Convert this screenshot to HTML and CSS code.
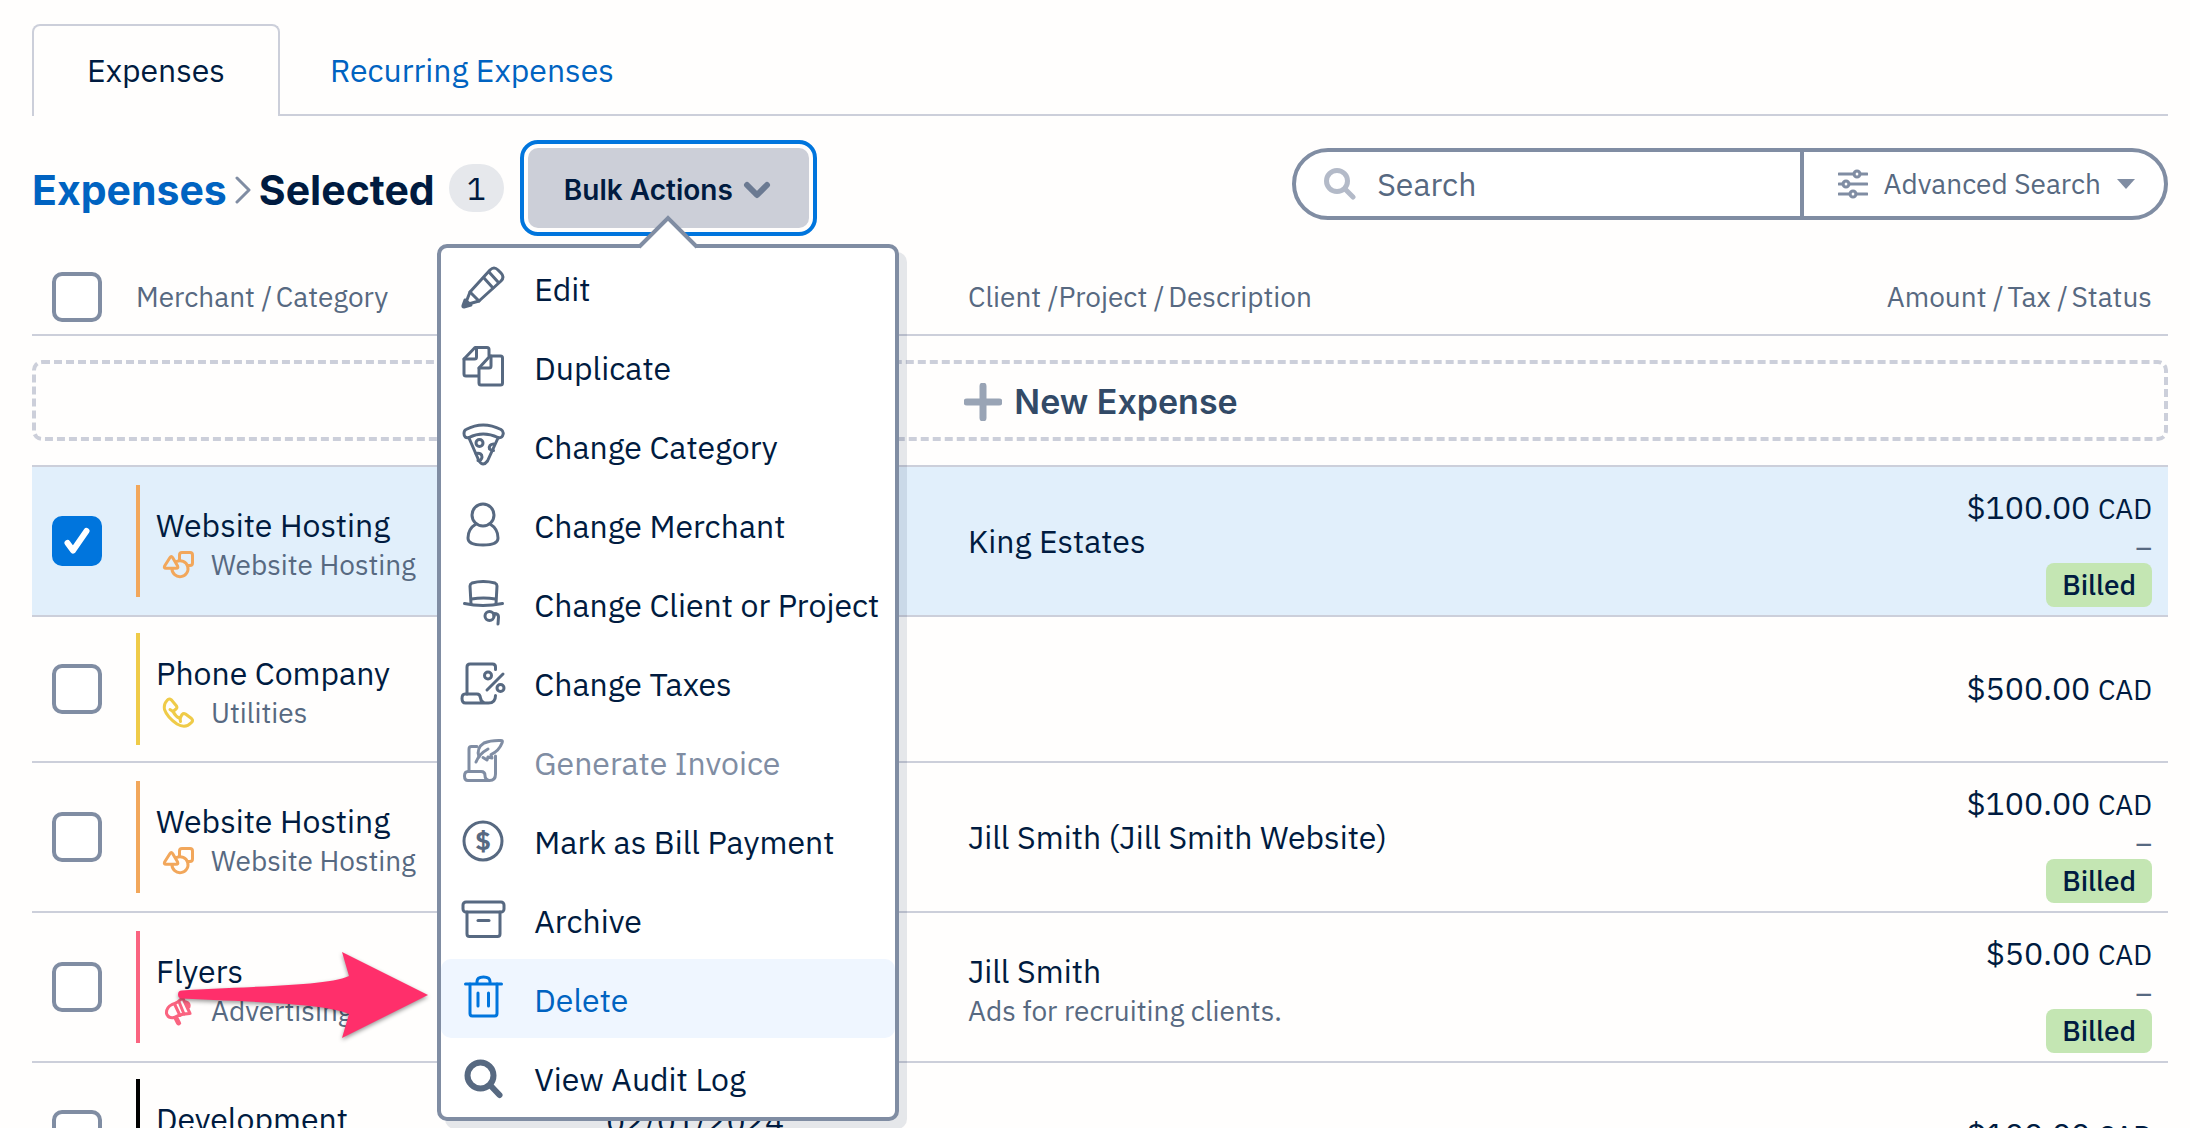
FILE: index.html
```html
<!DOCTYPE html>
<html lang="en">
<head>
    <meta charset="UTF-8">
    <meta name="viewport" content="width=device-width, initial-scale=1.0">
    <title>Expenses</title>
    <link rel="stylesheet" href="styles.css">
</head>
<body>
    <!-- Shared icons -->
    <svg class="sprite" aria-hidden="true">
        <symbol id="icon-shapes" viewBox="0 0 32 32">
            <path d="M8 8.5q1.300-2 2.600 0l5 8.500q1 2.300-1.400 2.300H4q-2.400 0-1.400-2.300z"/>
            <path d="M17.500 11V6q0-2.500 2.500-2.500h8q2.500 0 2.500 2.500v8q0 2.500-2.500 2.500h-2.500"/>
            <path d="M14.500 12.500a8 8 0 1 1-4.500 7"/>
        </symbol>
        <symbol id="icon-phone" viewBox="0 0 32 32">
            <path d="M5 3.500Q7 1 9.500 3l5 6q1 2-.5 3l-3 2.500q2.500 5 7 7l2-4q1.500-1.500 3.500-.5l6 4.500q2 2 0 4-6 6.500-14.500 1.500Q5 20 2.500 12.500 1.500 7 5 3.500z"/>
            <path d="M8 12.500l3 2M18 21.500l.5 3"/>
        </symbol>
        <symbol id="icon-megaphone" viewBox="0 0 32 32">
            <path d="M10 9.500q6-1.500 10.500-7L28 18.500q-8 0-16 4-6 1-7.500-4-.5-6 5.500-9z"/>
            <path d="M13 10l5 10.500M17.500 8l4.500 11"/>
            <path d="M24 7q4 1 3 5z" fill="currentColor"/>
            <path d="M14.500 24l2 4" stroke-width="5"/>
        </symbol>
    </svg>

    <main class="page">
        <nav class="tabs">
            <a href="#expenses" class="tab active">Expenses</a>
            <a href="#recurring" class="tab">Recurring Expenses</a>
        </nav>

        <header class="toolbar">
            <h1 class="breadcrumb">
                <a href="#expenses">Expenses</a>
                <svg class="crumb-arrow" viewBox="0 0 16 28"><path d="M2 2l12 12L2 26"/></svg>
                <span>Selected</span>
            </h1>
            <span class="count">1</span>

            <div class="bulk">
                <button type="button" class="bulk-button" aria-haspopup="true" aria-expanded="true">
                    Bulk Actions
                    <svg class="bulk-chevron" viewBox="0 0 28 18"><path d="M4 4l10 10L24 4"/></svg>
                </button>
                <div class="menu" role="menu">
                    <svg class="menu-pointer" viewBox="0 0 64 34">
                        <path class="fill" d="M3 34L32 4l29 30z"/>
                        <path class="line" d="M3 32L32 3l29 29"/>
                    </svg>
                    <button type="button" role="menuitem" class="menu-item">
                        <svg class="icon" viewBox="0 0 48 48">
                            <path d="M6 41l5-13L31 6q4-4 8 0l3 3q4 4 0 8L20 37z"/>
                            <path d="M11 28l9 9M25 14l9 10M30 8l9 10"/>
                            <path class="solid" d="M6 36l6 5-7 2q-1.500 0-1-1.500z"/>
                        </svg>
                        <span>Edit</span>
                    </button>
                    <button type="button" role="menuitem" class="menu-item">
                        <svg class="icon" viewBox="0 0 48 48">
                            <path d="M19 33H7q-2 0-2-2V16L16 4.500h12q2 0 2 2v6"/>
                            <path d="M17.500 4.500V14q0 2-2 2H5"/>
                            <path d="M20 25l11-12h10.500q2 0 2 2v25q0 2-2 2H22q-2 0-2-2z"/>
                            <path d="M32 13v10q0 2-2 2H20"/>
                        </svg>
                        <span>Duplicate</span>
                    </button>
                    <button type="button" role="menuitem" class="menu-item">
                        <svg class="icon" viewBox="0 0 48 48">
                            <path d="M7 7.500q17-9 35 0 3 2 2 5-1 4-5 3-15-7-29 0-5 1-5-4 0-3 2-4z"/>
                            <path d="M10 16l10 23q4 6 8.500 0L39 16"/>
                            <circle cx="20.500" cy="21" r="3.500"/>
                            <path d="M34.500 22q-5 .5-4 5 1.500 1.500 4 1.500M17 31.500q6-1 6 3.500-.5 4-4 3.500"/>
                        </svg>
                        <span>Change Category</span>
                    </button>
                    <button type="button" role="menuitem" class="menu-item">
                        <svg class="icon" viewBox="0 0 48 48">
                            <circle cx="24" cy="14" r="11"/>
                            <path d="M17 23c-5 3-8 8-8 14q0 7 15 7t15-7c0-6-3-11-8-14"/>
                        </svg>
                        <span>Change Merchant</span>
                    </button>
                    <button type="button" role="menuitem" class="menu-item">
                        <svg class="icon" viewBox="0 0 48 48">
                            <path d="M12 24L11 6q0-2 2-3 11-3 23 0 2 1 2 3l-1 18"/>
                            <path d="M5.500 23.500q18 4 38 0M12.500 19q12-2 24 0"/>
                            <circle cx="30.500" cy="36" r="4.500"/>
                            <path d="M35 36v-2.500q4.500 0 4.500 3.500l-.5 7"/>
                        </svg>
                        <span>Change Client or Project</span>
                    </button>
                    <button type="button" role="menuitem" class="menu-item">
                        <svg class="icon" viewBox="0 0 48 48">
                            <path d="M36.500 10.500V8q0-3-3-3H11q-3 0-3 3v27"/>
                            <path d="M36.500 36.500q0 7.500-7 7.500H6.500Q3 44 3 39.500T6 35h12q3 0 3.500 4t4 5"/>
                            <circle cx="29" cy="16.500" r="3.500"/>
                            <circle cx="41.500" cy="29" r="3.500"/>
                            <path d="M44 15L28 31"/>
                        </svg>
                        <span>Change Taxes</span>
                    </button>
                    <button type="button" role="menuitem" class="menu-item" disabled>
                        <svg class="icon" viewBox="0 0 48 48">
                            <path d="M18 8.500h-5.500q-2.500 0-2.500 2.500v22"/>
                            <path d="M36.500 18v18q0 6.500-6 6.500H9Q5.500 42.500 5.500 38T9 33.500h13q4 0 4 4t4 5"/>
                            <path d="M20 19q-3-9 5-14 7-3 17.500-2.500 1.500 0 .5 2.500-3 8-11 11.500l1 3.500-4-1-1 3-4-2.500"/>
                            <path d="M17 24q3-8 12-13"/>
                        </svg>
                        <span>Generate Invoice</span>
                    </button>
                    <button type="button" role="menuitem" class="menu-item">
                        <svg class="icon" viewBox="0 0 48 48">
                            <circle cx="24" cy="24" r="19"/>
                            <text class="dollar" x="24" y="33">$</text>
                        </svg>
                        <span>Mark as Bill Payment</span>
                    </button>
                    <button type="button" role="menuitem" class="menu-item">
                        <svg class="icon" viewBox="0 0 48 48">
                            <rect x="4" y="6" width="41" height="10" rx="3"/>
                            <path d="M8 16v22q0 2.500 2.500 2.500h28Q41 40.500 41 38V16"/>
                            <path d="M19 24.500h11"/>
                        </svg>
                        <span>Archive</span>
                    </button>
                    <button type="button" role="menuitem" class="menu-item selected">
                        <svg class="icon" viewBox="0 0 48 48">
                            <path d="M6.500 9h36M18 9V6.500q0-4.500 6.500-4.500T31 6.500V9"/>
                            <path d="M11 9v29.500q0 2.500 2.500 2.500h22q2.500 0 2.500-2.500V9"/>
                            <path d="M19 18v13M29.500 18v13"/>
                        </svg>
                        <span>Delete</span>
                    </button>
                    <button type="button" role="menuitem" class="menu-item">
                        <svg class="icon thick" viewBox="0 0 48 48">
                            <circle cx="21.500" cy="21.500" r="13"/>
                            <path d="M31 31l9.500 10"/>
                        </svg>
                        <span>View Audit Log</span>
                    </button>
                </div>
            </div>

            <form class="search">
                <label class="search-field">
                    <svg class="search-icon" viewBox="0 0 32 32"><circle cx="13" cy="13" r="10.500"/><path d="M21 21l8 8"/></svg>
                    <input type="text" placeholder="Search" aria-label="Search">
                </label>
                <button type="button" class="advanced">
                    <svg class="sliders" viewBox="0 0 30 30">
                        <path d="M1 5h15M22 5h7M1 15h4M11 15h18M1 25h11M18 25h11"/>
                        <circle cx="19" cy="5" r="3"/><circle cx="8" cy="15" r="3"/><circle cx="15" cy="25" r="3"/>
                    </svg>
                    Advanced Search
                    <svg class="caret" viewBox="0 0 18 10"><path d="M0 0h18L9 10z"/></svg>
                </button>
            </form>
        </header>

        <table class="expenses">
            <colgroup>
                <col class="col-check">
                <col class="col-merchant">
                <col class="col-date">
                <col>
                <col class="col-amount">
            </colgroup>
            <thead>
                <tr>
                    <th><input type="checkbox" aria-label="Select all"></th>
                    <th>Merchant <span class="slash">/</span> Category</th>
                    <th></th>
                    <th>Client /Project <span class="slash">/</span> Description</th>
                    <th class="right">Amount <span class="slash">/</span> Tax <span class="slash">/</span> Status</th>
                </tr>
            </thead>
            <tbody>
                <tr class="new-row">
                    <td colspan="5">
                        <button type="button" class="new-expense">
                            <svg class="plus" viewBox="0 0 38 38"><path d="M19 3v32M3 19h32"/></svg>
                            New Expense
                        </button>
                    </td>
                </tr>
                <tr class="checked tall">
                    <td><input type="checkbox" aria-label="Website Hosting" checked></td>
                    <td>
                        <div class="merchant orange">
                            <div class="name">Website Hosting</div>
                            <div class="category"><svg><use href="#icon-shapes"/></svg>Website Hosting</div>
                        </div>
                    </td>
                    <td></td>
                    <td>King Estates</td>
                    <td class="right">
                        <div class="amount">$100.00 <small>CAD</small></div>
                        <div class="tax">–</div>
                        <span class="status">Billed</span>
                    </td>
                </tr>
                <tr>
                    <td><input type="checkbox" aria-label="Phone Company"></td>
                    <td>
                        <div class="merchant yellow">
                            <div class="name">Phone Company</div>
                            <div class="category"><svg><use href="#icon-phone"/></svg>Utilities</div>
                        </div>
                    </td>
                    <td></td>
                    <td></td>
                    <td class="right">
                        <div class="amount">$500.00 <small>CAD</small></div>
                    </td>
                </tr>
                <tr class="tall">
                    <td><input type="checkbox" aria-label="Website Hosting"></td>
                    <td>
                        <div class="merchant orange">
                            <div class="name">Website Hosting</div>
                            <div class="category"><svg><use href="#icon-shapes"/></svg>Website Hosting</div>
                        </div>
                    </td>
                    <td></td>
                    <td>Jill Smith (Jill Smith Website)</td>
                    <td class="right">
                        <div class="amount">$100.00 <small>CAD</small></div>
                        <div class="tax">–</div>
                        <span class="status">Billed</span>
                    </td>
                </tr>
                <tr class="tall">
                    <td><input type="checkbox" aria-label="Flyers"></td>
                    <td>
                        <div class="merchant pink">
                            <div class="name">Flyers</div>
                            <div class="category"><svg><use href="#icon-megaphone"/></svg>Advertising</div>
                            <svg class="callout" viewBox="0 0 256 96">
                                <path d="M5 43.500C80 39 150 39 172 29l-7-24 86 43-86 43 7-24C150 57 80 55 5 51.500a4 4 0 0 1 0-8z"/>
                            </svg>
                        </div>
                    </td>
                    <td></td>
                    <td>
                        <div class="client">
                            <div>Jill Smith</div>
                            <div class="description">Ads for recruiting clients.</div>
                        </div>
                    </td>
                    <td class="right">
                        <div class="amount">$50.00 <small>CAD</small></div>
                        <div class="tax">–</div>
                        <span class="status">Billed</span>
                    </td>
                </tr>
                <tr>
                    <td><input type="checkbox" aria-label="Development"></td>
                    <td>
                        <div class="merchant black">
                            <div class="name">Development</div>
                        </div>
                    </td>
                    <td><div class="date">02/01/2024</div></td>
                    <td></td>
                    <td class="right">
                        <div class="amount">$100.00 <small>CAD</small></div>
                    </td>
                </tr>
            </tbody>
        </table>
    </main>
</body>
</html>
```
FILE: styles.css
```css
* {
    box-sizing: border-box;
}
body {
    margin: 0;
    height: 100vh;
    overflow: hidden;
    background-color: #fffefd;
    color: #001b40;
    font-family: "IBM Plex Sans", Roboto, sans-serif;
    font-size: 32px;
    line-height: 40px;
}
button,
input {
    font: inherit;
    color: inherit;
}
button {
    cursor: pointer;
}
svg {
    flex: none;
    fill: none;
    stroke: currentColor;
    stroke-linecap: round;
    stroke-linejoin: round;
}
.sprite {
    position: absolute;
    width: 0;
    height: 0;
}
.page {
    padding: 24px 22px 0 32px;
}

/* Tabs */
.tabs {
    display: flex;
    border-bottom: 2px solid #cccfda;
}
.tab {
    display: flex;
    align-items: center;
    height: 92px;
    margin-bottom: -2px;
    padding: 0 50px;
    color: #0063c1;
    text-decoration: none;
}
.tab.active {
    padding: 0 53px 2px;
    border: 2px solid #cccfda;
    border-bottom: 0;
    border-radius: 8px 8px 0 0;
    background-color: #fffefd;
    color: #001b40;
}

/* Toolbar */
.toolbar {
    display: flex;
    align-items: flex-start;
    padding: 32px 0 28px;
}
.breadcrumb {
    display: flex;
    align-items: center;
    height: 80px;
    margin: 0;
    padding-top: 4px;
    font-family: Inter, sans-serif;
    font-size: 41px;
    font-weight: 700;
}
.breadcrumb a {
    color: #0063c1;
    text-decoration: none;
}
.crumb-arrow {
    width: 16px;
    height: 28px;
    margin: 0 8px;
    color: #808da3;
    stroke-width: 3;
}
.count {
    margin: 16px 24px 0 14px;
    padding: 4px 18px;
    border-radius: 24px;
    background-color: #e6e8ec;
}
.bulk {
    position: relative;
}
.bulk-button {
    display: flex;
    align-items: center;
    gap: 10px;
    height: 80px;
    padding: 4px 38px 0 36px;
    border: 0;
    border-radius: 10px;
    outline: 4px solid #0075dd;
    outline-offset: 4px;
    background-color: #cccfd8;
    font-family: Inter, sans-serif;
    font-size: 28px;
    font-weight: 600;
}
.bulk-chevron {
    width: 28px;
    height: 18px;
    color: #6b7a92;
    stroke-width: 6;
}
.menu {
    position: absolute;
    z-index: 2;
    top: 96px;
    left: 50%;
    width: 462px;
    transform: translateX(-50%);
    border: 4px solid #808da3;
    border-radius: 10px;
    background-color: #fff;
    box-shadow: 8px 8px 0 rgba(0, 27, 64, 0.1);
}
.menu-pointer {
    position: absolute;
    top: -33px;
    left: 50%;
    width: 64px;
    height: 34px;
    margin-left: -32px;
}
.menu-pointer .fill {
    fill: #fff;
    stroke: none;
}
.menu-pointer .line {
    stroke: #808da3;
    stroke-width: 4;
    stroke-linecap: butt;
    stroke-linejoin: miter;
}
.menu-item {
    display: flex;
    align-items: center;
    gap: 27px;
    width: 100%;
    height: 79px;
    padding: 0 0 0 18px;
    border: 0;
    border-radius: 10px;
    background: none;
    text-align: left;
    white-space: nowrap;
}
.menu-item span {
    padding-top: 2px;
}
.menu-item:disabled,
.menu-item:disabled .icon {
    color: #808da3;
}
.menu-item.selected {
    background-color: #eff6ff;
    color: #0063c1;
}
.menu-item.selected .icon {
    color: #0075dd;
}
.icon {
    width: 48px;
    height: 48px;
    color: #576981;
    stroke-width: 3;
}
.icon.thick {
    stroke-width: 6;
}
.icon .solid {
    fill: currentColor;
}
.icon .dollar {
    fill: currentColor;
    stroke: none;
    font-size: 26px;
    font-weight: 700;
    text-anchor: middle;
}

/* Search */
.search {
    display: flex;
    width: 41%;
    height: 72px;
    margin-left: auto;
    border: 4px solid #808da3;
    border-radius: 36px;
    background-color: #fff;
    color: #576981;
}
.search-field {
    display: flex;
    flex: 1;
    align-items: center;
    gap: 21px;
    min-width: 0;
    padding-left: 28px;
}
.search-icon {
    width: 32px;
    height: 32px;
    color: #b3bac8;
    stroke-width: 5;
}
.search-field input {
    flex: 1;
    min-width: 0;
    padding: 0;
    border: 0;
    outline: 0;
    background: none;
}
.search-field input::placeholder {
    color: #576981;
    opacity: 1;
}
.advanced {
    display: flex;
    align-items: center;
    gap: 16px;
    padding: 0 29px 0 34px;
    border: 0;
    border-left: 4px solid #808da3;
    background: none;
    font-size: 28px;
}
.sliders {
    width: 30px;
    height: 30px;
    color: #808da3;
    stroke-width: 3;
}
.caret {
    width: 18px;
    height: 10px;
    fill: #808da3;
    stroke: none;
}

/* Table */
.expenses {
    width: 100%;
    table-layout: fixed;
    border-collapse: separate;
    border-spacing: 0;
}
.col-check {
    width: 104px;
}
.col-merchant {
    width: 470px;
}
.col-date {
    width: 362px;
}
.col-amount {
    width: 340px;
}
th,
td {
    padding: 0;
    border-bottom: 2px solid #cccfda;
    text-align: left;
    vertical-align: middle;
}
th {
    height: 80px;
    padding-top: 4px;
    color: #576981;
    font-size: 28px;
    font-weight: 400;
}
.slash {
    margin-right: -3px;
}
td {
    height: 146px;
}
.tall td {
    height: 150px;
}
.new-row td {
    height: 131px;
    padding: 24px 0;
}
.checked td {
    background-color: #e1effb;
}
th.right,
td.right {
    padding-right: 16px;
    text-align: right;
}
input[type="checkbox"] {
    display: block;
    width: 50px;
    height: 50px;
    margin: 0 0 0 20px;
    appearance: none;
    border: 4px solid #808da3;
    border-radius: 10px;
    background-color: #fff;
}
input[type="checkbox"]:checked {
    border-color: #0075dd;
    background: #0075dd url("data:image/svg+xml,%3Csvg xmlns='http://www.w3.org/2000/svg' viewBox='0 0 42 42'%3E%3Cpath d='M11.500 23l5.500 7.500L30.500 11' fill='none' stroke='white' stroke-width='6' stroke-linecap='round' stroke-linejoin='round'/%3E%3C/svg%3E") center no-repeat;
}
.new-expense {
    display: flex;
    align-items: center;
    justify-content: center;
    gap: 12px;
    width: 100%;
    height: 81px;
    padding: 2px 0 0 2px;
    border: 4px dashed #cccfda;
    border-radius: 10px;
    background: none;
    color: #324a67;
    font-family: Inter, sans-serif;
    font-size: 34px;
    font-weight: 600;
}
.plus {
    width: 38px;
    height: 38px;
    color: #99a4b5;
    stroke-width: 7;
}
.merchant {
    position: relative;
    height: 112px;
    padding: 20px 0 0 16px;
    border-left: 4px solid;
}
.merchant.orange {
    border-color: #f2a75b;
}
.merchant.yellow {
    border-color: #efcb48;
}
.merchant.pink {
    border-color: #fa6480;
}
.merchant.black {
    border-color: #000;
}
.category {
    display: flex;
    align-items: center;
    gap: 17px;
    padding-left: 6px;
    color: #576981;
    font-size: 28px;
}
.category svg {
    width: 32px;
    height: 32px;
    stroke-width: 3;
}
.orange svg {
    color: #f2a75b;
}
.yellow svg {
    color: #efcb48;
}
.pink svg {
    color: #fa6480;
}
.merchant .callout {
    position: absolute;
    z-index: 1;
    top: 16px;
    left: 37px;
    width: 256px;
    height: 96px;
    overflow: visible;
    fill: #ff2f6b;
    stroke: none;
    filter: drop-shadow(0 2px 2px rgba(0, 0, 0, 0.4));
}
.date {
    padding-bottom: 30px;
}
.client {
    padding-top: 8px;
}
.description {
    color: #576981;
    font-size: 28px;
}
.tall .amount {
    padding-top: 12px;
}
.amount small {
    font-size: 28px;
}
.tax {
    padding-top: 4px;
    color: #576981;
    font-size: 28px;
    line-height: 30px;
}
.status {
    display: block;
    width: fit-content;
    margin-left: auto;
    padding: 2px 16px;
    border-radius: 8px;
    background-color: #c4e6b3;
    font-size: 28px;
    font-weight: 500;
}
```
